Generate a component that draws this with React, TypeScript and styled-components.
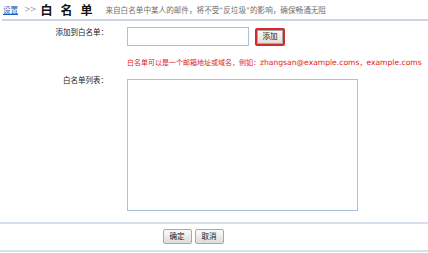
import React from 'react';
import styled, { createGlobalStyle } from 'styled-components';

const GlobalStyle = createGlobalStyle`
  body {
    margin: 0;
    background: #ffffff;
    font-family: "DejaVu Sans", "Noto Sans CJK SC", sans-serif;
    font-size: 7px;
    color: #333333;
  }
`;

const Page = styled.div`
  width: 428px;
  height: 253px;
  overflow: hidden;
`;

const Header = styled.div`
  display: flex;
  align-items: center;
  height: 19px;
  margin-left: 2px;
  padding-left: 1px;
  border-bottom: 2px solid #c9d7e5;
  white-space: nowrap;
`;

const Crumb = styled.a`
  color: #1a5bb5;
  text-decoration: underline;
  font-size: 7.5px;
`;

const Arrow = styled.span`
  color: #a0a8b4;
  font-size: 8px;
  margin: 0 5px 0 6px;
  letter-spacing: -1px;
`;

const Title = styled.span`
  font-size: 12px;
  font-weight: bold;
  color: #111111;
  letter-spacing: 8px;
`;

const Desc = styled.span`
  font-size: 7.6px;
  color: #707070;
  margin-left: 5px;
`;

const Form = styled.div`
  display: grid;
  grid-template-columns: 110px 1fr;
  column-gap: 17px;
  padding-top: 6px;
`;

const Label = styled.div<{ $top?: number }>`
  text-align: right;
  font-size: 7.5px;
  line-height: 12px;
  color: #222222;
  padding-top: ${({ $top }) => $top ?? 0}px;
  padding-right: 2px;
`;

const Field = styled.div`
  display: flex;
  align-items: center;
  gap: 6px;
`;

const TextInput = styled.input`
  box-sizing: border-box;
  width: 122px;
  height: 19px;
  margin: 0;
  border: 1px solid #a9c1d9;
  padding: 0 2px;
`;

const Button = styled.button<{ $focus?: boolean; $w: number }>`
  box-sizing: border-box;
  width: ${({ $w }) => $w}px;
  height: ${({ $focus }) => ($focus ? 18 : 15)}px;
  padding: 0;
  margin: 0;
  font-family: inherit;
  font-size: 7.5px;
  line-height: 1;
  color: #222222;
  background: linear-gradient(#fbfbfb, #dcdcdc);
  border: ${({ $focus }) => ($focus ? '2px solid #d42a2a' : '1px solid #a8a8a8')};
  border-radius: 2px;
  box-shadow: ${({ $focus }) => ($focus ? 'inset 0 0 0 1px #a8a8a8' : 'none')};
`;

const Hint = styled.div`
  grid-column: 2;
  color: #e01b1b;
  font-size: 7px;
  line-height: 12px;
  margin-top: 11px;
  white-space: nowrap;
`;

const Latin = styled.span`
  font-size: 7.6px;
`;

const ListArea = styled.textarea`
  box-sizing: border-box;
  display: block;
  width: 231px;
  height: 132px;
  margin: 10px 0 0 0;
  border: 1px solid #a9c1d9;
  resize: none;
`;

const Footer = styled.div`
  display: flex;
  justify-content: center;
  gap: 3px;
  margin-top: 11px;
  padding: 5px 42px 6px 0;
  border-top: 2px solid #d5e0ea;
  border-bottom: 2px solid #d5e0ea;
`;

export default function App() {
  return (
    <Page>
      <GlobalStyle />
      <Header>
        <Crumb href="#">设置</Crumb>
        <Arrow>&gt;&gt;</Arrow>
        <Title>白名单</Title>
        <Desc>来自白名单中某人的邮件，将不受“反垃圾”的影响，确保畅通无阻</Desc>
      </Header>
      <Form>
        <Label>添加到白名单：</Label>
        <Field>
          <TextInput type="text" />
          <Button $focus $w={30}>添加</Button>
        </Field>
        <Hint>
          白名单可以是一个邮箱地址或域名，例如：<Latin>zhangsan@example.coms</Latin>，<Latin>example.coms</Latin>
        </Hint>
        <Label $top={6}>白名单列表：</Label>
        <ListArea />
      </Form>
      <Footer>
        <Button $w={29}>确定</Button>
        <Button $w={29}>取消</Button>
      </Footer>
    </Page>
  );
}
